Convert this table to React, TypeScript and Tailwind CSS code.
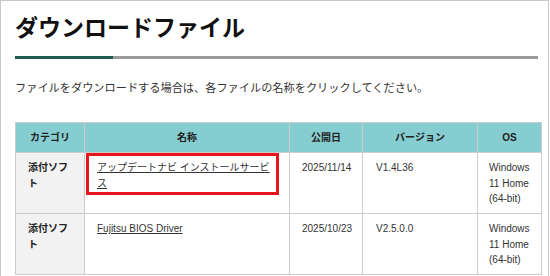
import React from "react";

type Row = {
  category: string;
  name: string;
  date: string;
  version: string;
  os: string[];
  marked?: boolean;
};

const rows: Row[] = [
  {
    category: "添付ソフト",
    name: "アップデートナビ インストールサービス",
    date: "2025/11/14",
    version: "V1.4L36",
    os: ["Windows", "11 Home", "(64-bit)"],
    marked: true,
  },
  {
    category: "添付ソフト",
    name: "Fujitsu BIOS Driver",
    date: "2025/10/23",
    version: "V2.5.0.0",
    os: ["Windows", "11 Home", "(64-bit)"],
  },
];

const headers = ["カテゴリ", "名称", "公開日", "バージョン", "OS"];

export default function App() {
  return (
    <div className="min-h-[276px] w-[549px] border-l border-t border-r border-[#c8c8c8] bg-white pl-[14px] font-['Liberation_Sans','Noto_Sans_CJK_JP',sans-serif] text-[#333]">
      <h1 className="pt-[11px] text-[23px] font-bold leading-[32px] text-[#111]">
        ダウンロードファイル
      </h1>
      <div className="mt-[12px] flex w-[523px]">
        <div className="h-[3px] w-[98px] bg-[#1d5e4f]" />
        <div className="h-[3px] flex-1 bg-[#9a9a9a]" />
      </div>
      <p className="mt-[21px] text-[11.2px] leading-[16px]">
        ファイルをダウンロードする場合は、各ファイルの名称をクリックしてください。
      </p>

      <table className="mt-[26px] w-[526px] table-fixed border-collapse text-[10px] leading-[15.5px]">
        <colgroup>
          <col className="w-[69px]" />
          <col className="w-[205px]" />
          <col className="w-[73px]" />
          <col className="w-[115px]" />
          <col className="w-[64px]" />
        </colgroup>
        <thead>
          <tr className="h-[30px] bg-[#86cdd1]">
            {headers.map((h) => (
              <th
                key={h}
                className="border border-[#cccccc] px-[8px] text-center align-middle font-bold text-[#222]"
              >
                {h}
              </th>
            ))}
          </tr>
        </thead>
        <tbody>
          {rows.map((row, i) => (
            <tr key={i} className="h-[61px]">
              <td className="border border-[#cccccc] bg-[#f2f2f2] px-[12px] pt-[7px] align-top font-bold text-[#222]">
                {row.category}
              </td>
              <td className="relative border border-[#cccccc] px-[12px] pt-[7px] align-top">
                <a href="#" className="underline">
                  {row.name}
                </a>
                {row.marked && (
                  <div className="absolute left-[1px] top-0 h-[42px] w-[193px] border-[3px] border-[#e8141e]" />
                )}
              </td>
              <td className="border border-[#cccccc] px-[12px] pt-[7px] align-top">
                {row.date}
              </td>
              <td className="border border-[#cccccc] px-[13px] pt-[7px] align-top">
                {row.version}
              </td>
              <td className="border border-[#cccccc] px-[11px] pt-[7px] align-top">
                {row.os.map((line) => (
                  <div key={line}>{line}</div>
                ))}
              </td>
            </tr>
          ))}
        </tbody>
      </table>
    </div>
  );
}
